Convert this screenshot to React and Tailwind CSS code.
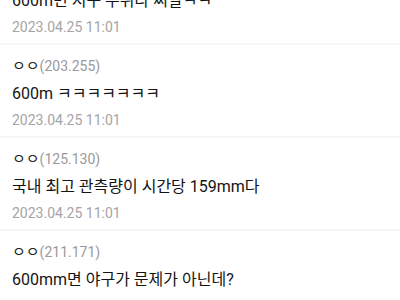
import React from 'react';

const comments = [
  { name: 'ㅇㅇ', ip: '(118.235)', body: '600m면 지구 우쥐나 씨발ㅋㅋ', date: '2023.04.25 11:01' },
  { name: 'ㅇㅇ', ip: '(203.255)', body: '600m ㅋㅋㅋㅋㅋㅋㅋ', date: '2023.04.25 11:01' },
  { name: 'ㅇㅇ', ip: '(125.130)', body: '국내 최고 관측량이 시간당 159mm다', date: '2023.04.25 11:01' },
  { name: 'ㅇㅇ', ip: '(211.171)', body: '600mm면 야구가 문제가 아닌데?', date: '2023.04.25 11:02' },
];

const CommentRow = ({ name, ip, body, date }) => (
  <li className="border-b-2 border-[#f6f6f6] px-3 pt-[11px] pb-[6px]">
    <div className="flex items-baseline h-5 leading-5">
      <span className="text-[15px] text-[#222]">{name}</span>
      <span className="text-[14px] text-[#9a9a9a]">{ip}</span>
    </div>
    <p className="mt-2 text-[16px] leading-5 text-[#141414]">{body}</p>
    <p className="mt-[6px] text-[14px] leading-5 text-[#a5a5a5]">{date}</p>
  </li>
);

export default function App() {
  return (
    <div
      className="w-[400px] h-[300px] overflow-hidden bg-white"
      style={{ fontFamily: "Roboto, 'Noto Sans CJK KR', sans-serif" }}
    >
      <ul className="-mt-[48px]">
        {comments.map((c, i) => (
          <CommentRow key={i} {...c} />
        ))}
      </ul>
    </div>
  );
}
